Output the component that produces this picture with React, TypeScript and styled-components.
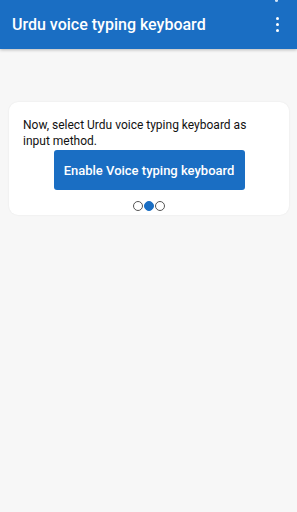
import React from "react";
import styled, { createGlobalStyle } from "styled-components";

const GlobalStyle = createGlobalStyle`
  html, body {
    margin: 0;
    padding: 0;
    background: #f7f7f7;
    font-family: Roboto, "Liberation Sans", sans-serif;
  }
`;

const Screen = styled.div`
  width: 297px;
  height: 512px;
  background: #f7f7f7;
  display: flex;
  flex-direction: column;
  overflow: hidden;
`;

const AppBar = styled.header`
  height: 49px;
  flex-shrink: 0;
  background: #1a6ec3;
  display: flex;
  align-items: center;
  justify-content: space-between;
  padding: 0 18px 0 12px;
  box-shadow: 0 1px 3px rgba(0, 0, 0, 0.25);
  position: relative;
`;

const Title = styled.h1`
  margin: 0;
  color: #fff;
  font-size: 16px;
  font-weight: 500;
`;

const StatusDot = styled.span`
  position: absolute;
  right: 19px;
  top: -2px;
  width: 3px;
  height: 4px;
  border-radius: 2px;
  background: #cfe3f7;
`;

const MenuButton = styled.button`
  background: none;
  border: 0;
  padding: 0;
  display: flex;
  flex-direction: column;
  gap: 2.5px;
  align-items: center;
  cursor: pointer;
`;

const Dot = styled.span`
  width: 3.5px;
  height: 3.5px;
  border-radius: 50%;
  background: #fff;
`;

const Content = styled.main`
  padding: 53px 8px 0 9px;
`;

const Card = styled.section`
  background: #fff;
  border-radius: 9px;
  box-shadow: 0 0 2px rgba(0, 0, 0, 0.08);
  padding: 15px 14px 4px 14px;
  display: flex;
  flex-direction: column;
  align-items: stretch;
`;

const Message = styled.p`
  margin: 0;
  color: #111;
  font-size: 12px;
  line-height: 16px;
`;

const EnableButton = styled.button`
  align-self: center;
  margin-top: 1px;
  width: 191px;
  height: 40px;
  background: #1a6ec3;
  color: #fff;
  border: 0;
  border-radius: 3px;
  font-family: Roboto, "Liberation Sans", sans-serif;
  font-size: 13px;
  font-weight: 500;
  cursor: pointer;
`;

const Pager = styled.div`
  display: flex;
  justify-content: center;
  gap: 1px;
  margin-top: 11px;
`;

const PageDot = styled.span<{ $active?: boolean }>`
  width: 10px;
  height: 10px;
  border-radius: 50%;
  box-sizing: border-box;
  border: 1px solid ${({ $active }) => ($active ? "#1a6ec3" : "#555")};
  background: ${({ $active }) => ($active ? "#1a6ec3" : "#fff")};
`;

export default function App() {
  return (
    <>
      <GlobalStyle />
      <Screen>
        <AppBar>
          <StatusDot />
          <Title>Urdu voice typing keyboard</Title>
          <MenuButton aria-label="More options">
            <Dot />
            <Dot />
            <Dot />
          </MenuButton>
        </AppBar>
        <Content>
          <Card>
            <Message>
              Now, select Urdu voice typing keyboard as input method.
            </Message>
            <EnableButton>Enable Voice typing keyboard</EnableButton>
            <Pager>
              <PageDot />
              <PageDot $active />
              <PageDot />
            </Pager>
          </Card>
        </Content>
      </Screen>
    </>
  );
}
